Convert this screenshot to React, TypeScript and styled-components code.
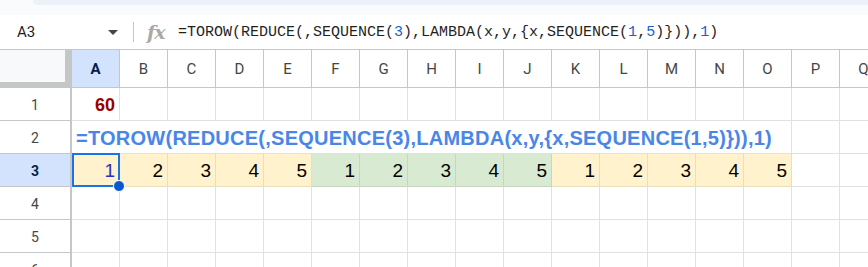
import React from 'react';
import styled, {createGlobalStyle} from 'styled-components';

const COLUMNS = ['A', 'B', 'C', 'D', 'E', 'F', 'G', 'H', 'I', 'J', 'K', 'L', 'M', 'N', 'O', 'P', 'Q'];
const YELLOW = {bg: '#fff2cc', line: '#e9dfbd'};
const GREEN = {bg: '#d9ead3', line: '#c6d6c0'};

const row3 = [1, 2, 3, 4, 5, 1, 2, 3, 4, 5, 1, 2, 3, 4, 5].map((value, i) => ({
    value,
    tone: i >= 5 && i < 10 ? GREEN : YELLOW,
}));

const GlobalStyle = createGlobalStyle`
    html, body {
        margin: 0;
        padding: 0;
        background: #ffffff;
    }

    body {
        width: 868px;
        height: 267px;
        overflow: hidden;
        font-family: Roboto, "Liberation Sans", Arial, sans-serif;
    }
`;

const App = () => {
    return (
        <>
            <GlobalStyle/>
            <Page>
                <TopBand>
                    <ToolbarEdge/>
                </TopBand>
                <FormulaBar>
                    <NameBox>
                        <span>{'A3'}</span>
                        <Caret/>
                    </NameBox>
                    <Divider/>
                    <FxIcon>{'fx'}</FxIcon>
                    <FormulaText>
                        {'=TOROW(REDUCE(,SEQUENCE('}
                        <Num>{'3'}</Num>
                        {'),LAMBDA(x,y,{x,SEQUENCE('}
                        <Num>{'1'}</Num>
                        {','}
                        <Num>{'5'}</Num>
                        {')})),'}
                        <Num>{'1'}</Num>
                        {')'}
                    </FormulaText>
                </FormulaBar>
                <Grid>
                    <Corner/>
                    {COLUMNS.map((c) => (
                        <ColHeader
                            key={c}
                            $active={c === 'A'}
                        >
                            {c}
                        </ColHeader>
                    ))}

                    <RowHeader>{'1'}</RowHeader>
                    <Cell>
                        <Total>{'60'}</Total>
                    </Cell>
                    {COLUMNS.slice(1).map((c) => <Cell key={'1' + c}/>)}

                    <RowHeader>{'2'}</RowHeader>
                    <SpanCell $span={15}>
                        <FormulaEcho>{'=TOROW(REDUCE(,SEQUENCE(3),LAMBDA(x,y,{x,SEQUENCE(1,5)})),1)'}</FormulaEcho>
                    </SpanCell>
                    <Cell/>
                    <Cell/>

                    <RowHeader $active={true}>{'3'}</RowHeader>
                    {row3.map((item, i) => (
                        <Cell
                            key={'3' + i}
                            $bg={item.tone.bg}
                            $line={item.tone.line}
                            $raised={i === 0}
                        >
                            <Value $selected={i === 0}>{item.value}</Value>
                            {i === 0 && (
                                <Selection>
                                    <FillHandle/>
                                </Selection>
                            )}
                        </Cell>
                    ))}
                    <Cell/>
                    <Cell/>

                    {['4', '5', '6'].map((r) => (
                        <React.Fragment key={r}>
                            <RowHeader>{r}</RowHeader>
                            {COLUMNS.map((c) => <Cell key={r + c}/>)}
                        </React.Fragment>
                    ))}
                </Grid>
            </Page>
        </>
    );
};

const Page = styled.div`
    width: 868px;
    height: 267px;
    overflow: hidden;
`;

const TopBand = styled.div`
    height: 15px;
    background: #f9fbfd;
    padding-left: 33px;
`;

const ToolbarEdge = styled.div`
    height: 5px;
    background: #edf2fa;
    border-bottom-left-radius: 6px;
`;

const FormulaBar = styled.div`
    display: flex;
    align-items: center;
    height: 34px;
    border-bottom: 1px solid #c4c7c5;
    background: #ffffff;
`;

const NameBox = styled.div`
    display: flex;
    align-items: center;
    justify-content: space-between;
    box-sizing: border-box;
    width: 125px;
    padding: 0 7px 0 17px;
    font-size: 15px;
    color: #1f1f1f;
`;

const Caret = styled.span`
    width: 0;
    height: 0;
    border-left: 5px solid transparent;
    border-right: 5px solid transparent;
    border-top: 5px solid #444746;
`;

const Divider = styled.span`
    width: 1px;
    height: 20px;
    margin-left: 8px;
    background: #c4c7c5;
`;

const FxIcon = styled.span`
    margin-left: 13px;
    width: 19px;
    font-family: "DejaVu Serif", "Liberation Serif", serif;
    font-style: italic;
    font-weight: 700;
    font-size: 19px;
    line-height: 20px;
    color: #a9a9a9;
    letter-spacing: -1px;
`;

const FormulaText = styled.div`
    margin-left: 12px;
    font-family: "Liberation Mono", "DejaVu Sans Mono", monospace;
    font-size: 15px;
    color: #1f1f1f;
    white-space: nowrap;
`;

const Num = styled.span`
    color: #1a5fd0;
`;

const Grid = styled.div`
    display: grid;
    grid-template-columns: 72px repeat(17, 48px);
    grid-template-rows: 38px repeat(6, 33px);
    width: 868px;
    overflow: hidden;
`;

const Corner = styled.div`
    box-sizing: border-box;
    background: #f8f9fa;
    border-right: 7px solid #c4c7c5;
    border-bottom: 6px solid #c4c7c5;
`;

const ColHeader = styled.div<{$active?: boolean}>`
    box-sizing: border-box;
    display: flex;
    align-items: center;
    justify-content: center;
    border-right: 1px solid #c4c7c5;
    border-bottom: 1px solid #c4c7c5;
    background: ${(p) => (p.$active ? '#d3e3fd' : '#ffffff')};
    color: ${(p) => (p.$active ? '#041e49' : '#444746')};
    font-weight: ${(p) => (p.$active ? 700 : 400)};
    font-size: 15px;
`;

const RowHeader = styled.div<{$active?: boolean}>`
    box-sizing: border-box;
    display: flex;
    align-items: center;
    justify-content: center;
    padding-top: 2px;
    border-right: 2px solid #c4c7c5;
    border-bottom: 1px solid #c4c7c5;
    background: ${(p) => (p.$active ? '#d3e3fd' : '#ffffff')};
    color: ${(p) => (p.$active ? '#041e49' : '#444746')};
    font-weight: ${(p) => (p.$active ? 700 : 400)};
    font-size: 14px;
`;

const Cell = styled.div<{$bg?: string; $line?: string; $raised?: boolean}>`
    position: relative;
    z-index: ${(p) => (p.$raised ? 2 : 0)};
    box-sizing: border-box;
    display: flex;
    align-items: flex-end;
    justify-content: flex-end;
    padding: 0 4px 4px 0;
    background: ${(p) => p.$bg || '#ffffff'};
    border-right: 1px solid ${(p) => p.$line || '#e1e1e1'};
    border-bottom: 1px solid ${(p) => p.$line || '#e1e1e1'};
    font-family: "Liberation Sans", Arial, sans-serif;
`;

const SpanCell = styled.div<{$span: number}>`
    grid-column: span ${(p) => p.$span};
    box-sizing: border-box;
    display: flex;
    align-items: flex-end;
    padding: 0 0 3px 4px;
    border-right: 1px solid #e1e1e1;
    border-bottom: 1px solid #e1e1e1;
    white-space: nowrap;
    overflow: visible;
`;

const Total = styled.span`
    font-size: 18px;
    line-height: 22px;
    font-weight: 700;
    color: #990000;
`;

const FormulaEcho = styled.span`
    font-family: "Liberation Sans", Arial, sans-serif;
    font-size: 20px;
    line-height: 24px;
    letter-spacing: 0.25px;
    font-weight: 700;
    color: #4a86e8;
`;

const Value = styled.span<{$selected?: boolean}>`
    font-size: 19px;
    line-height: 22px;
    color: ${(p) => (p.$selected ? '#2d2dc4' : '#000000')};
`;

const Selection = styled.div`
    position: absolute;
    top: -1px;
    left: 0;
    right: -1px;
    bottom: -1px;
    border: 2px solid #1a73e8;
    pointer-events: none;
`;

const FillHandle = styled.span`
    position: absolute;
    right: -7px;
    bottom: -7px;
    width: 10px;
    height: 10px;
    border-radius: 50%;
    background: #0b57d0;
    border: 1px solid #ffffff;
`;

export default App;
